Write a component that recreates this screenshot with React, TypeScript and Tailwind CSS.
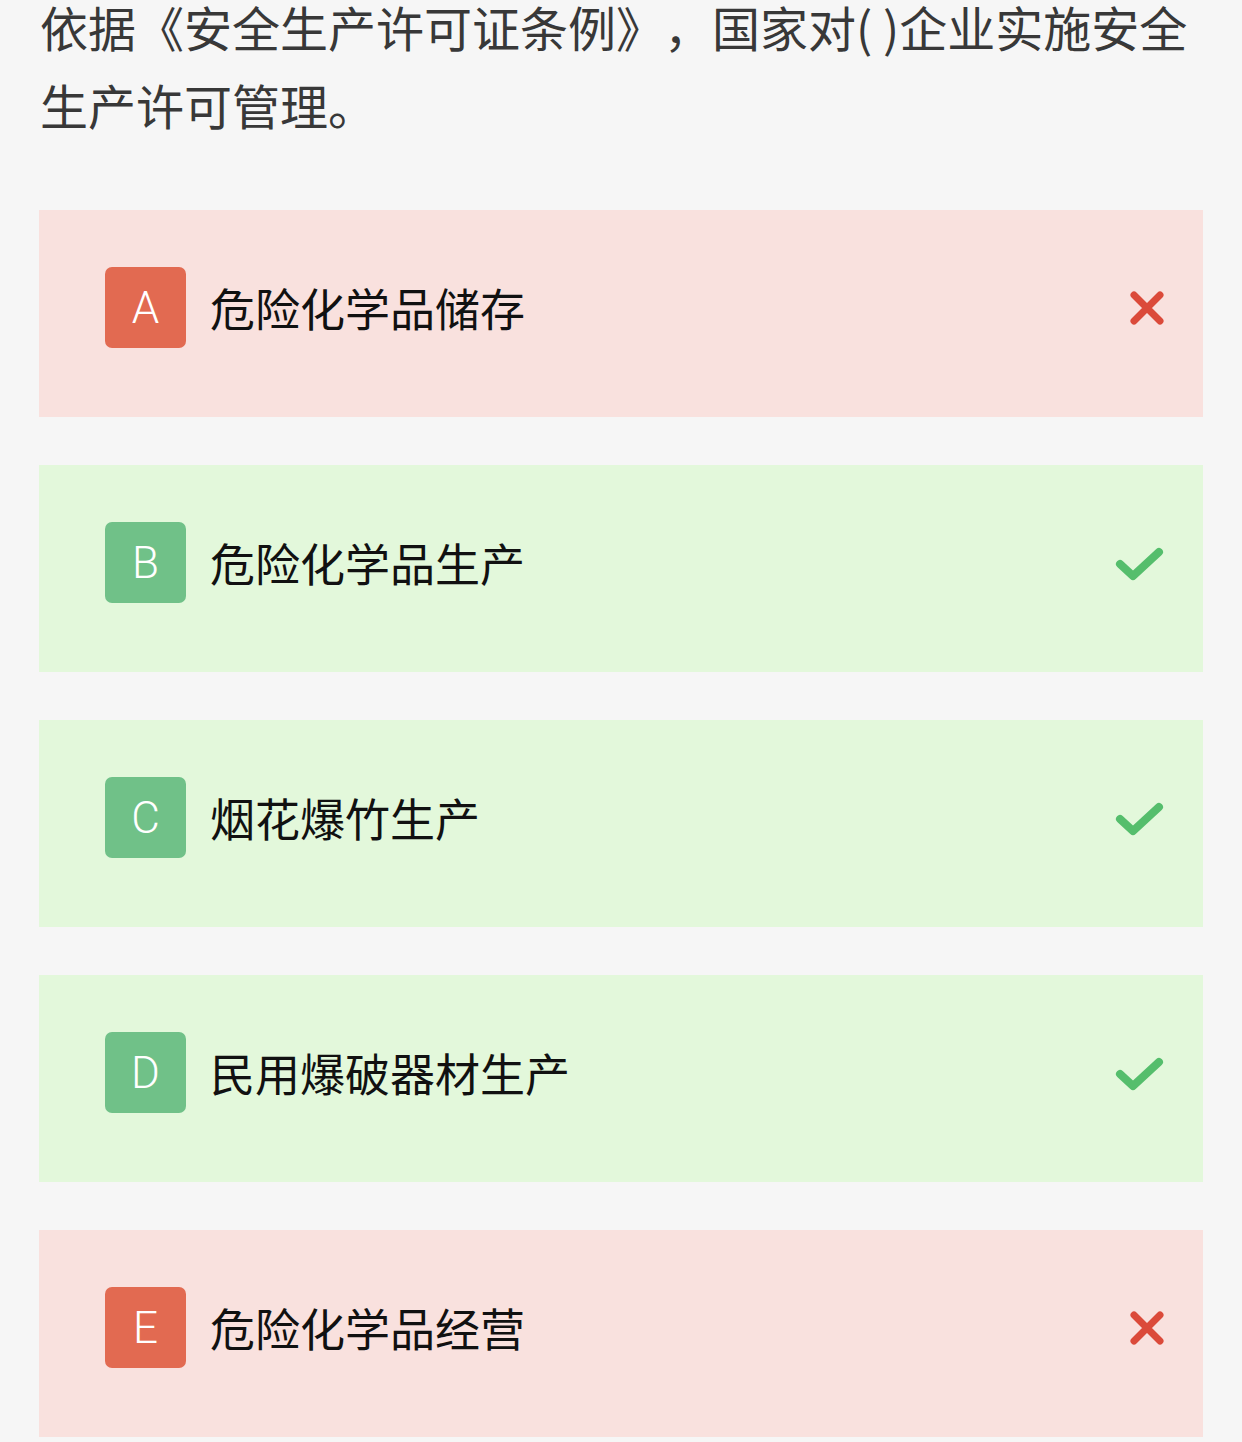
import React from 'react';

type Option = { key: string; text: string; ok: boolean };

const options: Option[] = [
  { key: 'A', text: '危险化学品储存', ok: false },
  { key: 'B', text: '危险化学品生产', ok: true },
  { key: 'C', text: '烟花爆竹生产', ok: true },
  { key: 'D', text: '民用爆破器材生产', ok: true },
  { key: 'E', text: '危险化学品经营', ok: false },
];

function Cross() {
  return (
    <svg width="42" height="42" viewBox="0 0 42 42" className="mr-[-4px]">
      <path d="M8 8 L34 34 M34 8 L8 34" stroke="#db4a3a" strokeWidth="7" strokeLinecap="round" fill="none" />
    </svg>
  );
}

function Check() {
  return (
    <svg width="56" height="42" viewBox="0 0 56 42" className="mr-[-4px] mt-[6px]">
      <path d="M8 19 L21 31 L47 7" stroke="#55be6c" strokeWidth="8" strokeLinecap="round" strokeLinejoin="round" fill="none" />
    </svg>
  );
}

export default function App() {
  return (
    <div className="min-h-screen bg-[#f6f6f6] px-[39px] pb-8 overflow-hidden">
      <p
        className="mt-[-13px] pl-px text-[48px] leading-[78px] text-[#383838] [text-spacing-trim:space-all]"
        style={{ fontFamily: '"Noto Sans CJK SC", "Noto Sans", sans-serif' }}
      >
        依据《安全生产许可证条例》，国家对( )企业实施安全生产许可管理。
      </p>

      <div className="mt-[67px] flex flex-col gap-[48px]">
        {options.map((o) => (
          <div
            key={o.key}
            className={`flex items-center justify-between h-[207px] pl-[66px] pr-[39px] pb-[12px] ${
              o.ok ? 'bg-[#e3f8db]' : 'bg-[#f9e1de]'
            }`}
          >
            <div className="flex items-center gap-[24px]">
              <div
                className={`w-[81px] h-[81px] rounded-[7px] flex items-center justify-center text-white text-[44px] font-light ${
                  o.ok ? 'bg-[#70c188]' : 'bg-[#e26a51]'
                }`}
                style={{ fontFamily: 'Roboto, "Liberation Sans", sans-serif' }}
              >
                {o.key}
              </div>
              <span
                className="text-[45px] text-[#111]"
                style={{ fontFamily: '"Noto Sans CJK SC", "Noto Sans", sans-serif' }}
              >
                {o.text}
              </span>
            </div>
            {o.ok ? <Check /> : <Cross />}
          </div>
        ))}
      </div>
    </div>
  );
}
